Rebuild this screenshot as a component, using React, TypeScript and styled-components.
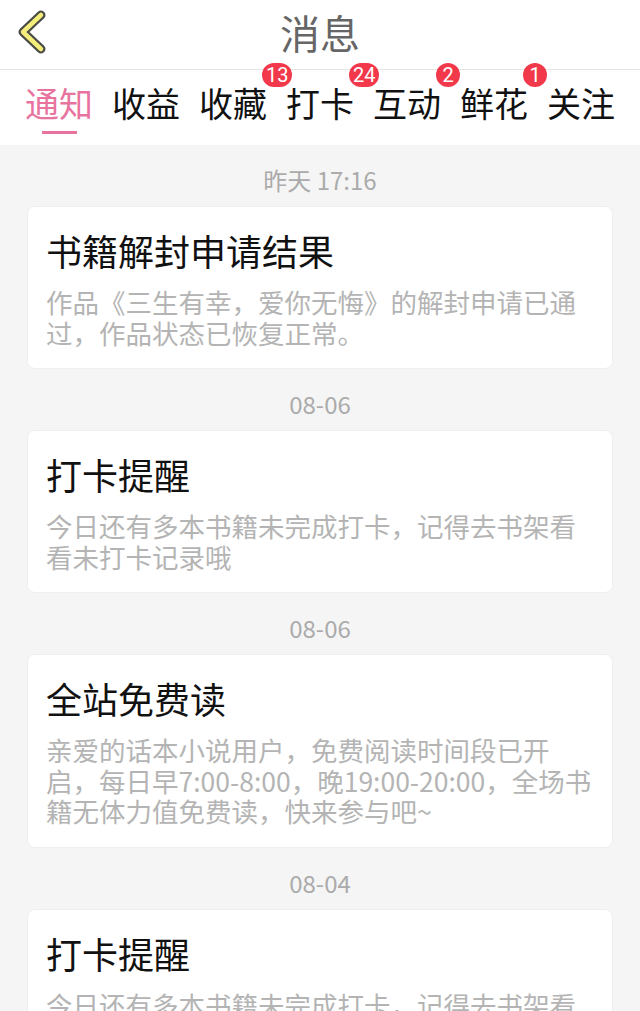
import styled, { createGlobalStyle } from 'styled-components'

const GlobalStyle = createGlobalStyle`
  html, body {
    margin: 0;
    padding: 0;
    background: #f5f5f5;
    font-family: "Noto Sans CJK SC", "Noto Sans", sans-serif;
  }
`

const Page = styled.div`
  min-height: 100vh;
  background: #f5f5f5;
`

const Header = styled.header`
  box-sizing: border-box;
  height: 70px;
  display: grid;
  grid-template-columns: 1fr auto 1fr;
  align-items: center;
  background: #fff;
  border-bottom: 1px solid #e4e4e4;
`

const BackButton = styled.button`
  justify-self: start;
  display: flex;
  padding: 0 0 4px 15px;
  border: 0;
  background: none;
`

const Title = styled.h1`
  margin: 0 0 5px;
  font-size: 40px;
  font-weight: 400;
  line-height: 50px;
  color: #666;
`

const TabBar = styled.nav`
  height: 75px;
  display: flex;
  align-items: flex-start;
  gap: 19px;
  padding: 13px 0 0 25px;
  box-sizing: border-box;
  background: #fff;
`

const Tab = styled.div<{ $active?: boolean }>`
  position: relative;
  font-size: 34px;
  line-height: 40px;
  padding-bottom: 11px;
  color: ${(p) => (p.$active ? '#e8739f' : '#111')};

  &::after {
    content: '';
    display: ${(p) => (p.$active ? 'block' : 'none')};
    position: absolute;
    left: 50%;
    bottom: 0;
    width: 35px;
    height: 3px;
    margin-left: -17px;
    background: #e8739f;
  }
`

const Badge = styled.span`
  position: absolute;
  top: -20px;
  left: calc(100% - 5px);
  box-sizing: border-box;
  min-width: 24px;
  height: 24px;
  padding: 0 4px;
  border-radius: 12px;
  background: #f2394b;
  color: #fff;
  font-family: Roboto, "Liberation Sans", sans-serif;
  font-size: 20px;
  line-height: 24px;
  text-align: center;
`

const List = styled.main`
  padding: 0 27px;
`

const DateLabel = styled.div`
  padding: 22px 0 13px;
  text-align: center;
  font-size: 24px;
  line-height: 26px;
  color: #ababab;
`

const Card = styled.section`
  background: #fff;
  border: 1px solid #efefef;
  border-radius: 8px;
  padding: 21px 18px 20px;
`

const CardTitle = styled.h2`
  margin: 0;
  font-size: 36px;
  font-weight: 400;
  line-height: 44px;
  color: #111;
`

const CardBody = styled.p`
  margin: 15px 0 0;
  font-size: 26.5px;
  line-height: 30.5px;
  color: #b4b4b4;
`

const tabs = [
  { label: '通知', active: true },
  { label: '收益' },
  { label: '收藏', badge: '13' },
  { label: '打卡', badge: '24' },
  { label: '互动', badge: '2' },
  { label: '鲜花', badge: '1' },
  { label: '关注' }
]

const messages = [
  {
    date: '昨天 17:16',
    title: '书籍解封申请结果',
    body: '作品《三生有幸，爱你无悔》的解封申请已通过，作品状态已恢复正常。'
  },
  {
    date: '08-06',
    title: '打卡提醒',
    body: '今日还有多本书籍未完成打卡，记得去书架看看未打卡记录哦'
  },
  {
    date: '08-06',
    title: '全站免费读',
    body: '亲爱的话本小说用户，免费阅读时间段已开启，每日早7:00-8:00，晚19:00-20:00，全场书籍无体力值免费读，快来参与吧~'
  },
  {
    date: '08-04',
    title: '打卡提醒',
    body: '今日还有多本书籍未完成打卡，记得去书架看看未打卡记录哦'
  }
]

function BackIcon() {
  return (
    <svg width='36' height='50' viewBox='0 0 36 50'>
      <polyline points='26,7 8,24 26,41' fill='none' stroke='#4a4a44' strokeWidth='9' strokeLinecap='round' strokeLinejoin='round' />
      <polyline points='26,7 8,24 26,41' fill='none' stroke='#f3ee7c' strokeWidth='4.5' strokeLinecap='round' strokeLinejoin='round' />
    </svg>
  )
}

function App() {
  return (
    <Page>
      <GlobalStyle />
      <Header>
        <BackButton aria-label='back'>
          <BackIcon />
        </BackButton>
        <Title>消息</Title>
        <span />
      </Header>
      <TabBar>
        {tabs.map((tab) => (
          <Tab key={tab.label} $active={tab.active}>
            {tab.label}
            {tab.badge && <Badge>{tab.badge}</Badge>}
          </Tab>
        ))}
      </TabBar>
      <List>
        {messages.map((m, i) => (
          <div key={i}>
            <DateLabel>{m.date}</DateLabel>
            <Card>
              <CardTitle>{m.title}</CardTitle>
              <CardBody>{m.body}</CardBody>
            </Card>
          </div>
        ))}
      </List>
    </Page>
  )
}

export default App
